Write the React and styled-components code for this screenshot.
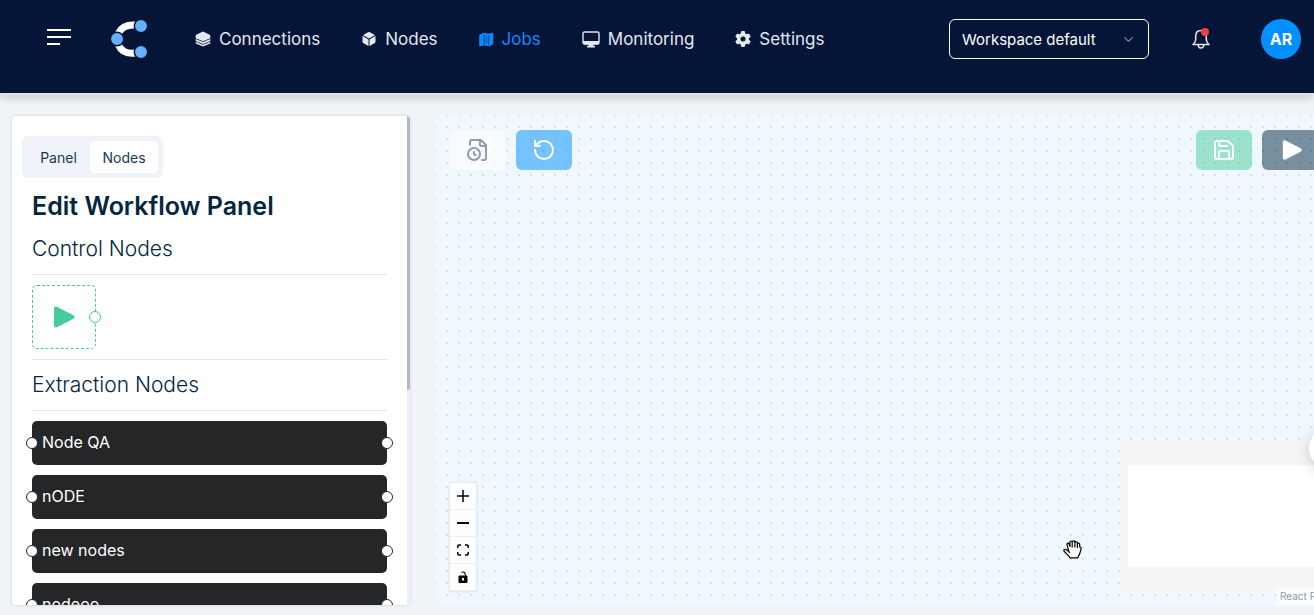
import React from "react";
import styled, { createGlobalStyle, css } from "styled-components";
import { FileClock, RotateCcw, Save, ChevronDown } from "lucide-react";
import { IoCube } from "react-icons/io5";
import { FaGear } from "react-icons/fa6";

const GlobalStyle = createGlobalStyle`
  *, *::before, *::after { box-sizing: border-box; }
  body {
    margin: 0;
    overflow: hidden;
    background: #f0f3f8;
    color: #02263f;
    font-family: Inter, "Open Sans", sans-serif;
  }
  button, select { font-family: inherit; margin: 0; }
`;

const Page = styled.div`
  display: flex;
  flex-direction: column;
  height: 100vh;
`;

const Header = styled.header`
  display: flex;
  align-items: center;
  flex: none;
  padding: 16px 13px 31px 47px;
  background: #051537;
  border-bottom: 2px solid #e0e1e3;
  box-shadow: 0 2px 10px rgba(0, 0, 0, 0.2);
  z-index: 1;
`;

const IconButton = styled.button`
  display: flex;
  align-items: center;
  justify-content: center;
  padding: 0;
  border: 0;
  background: none;
  color: #e3e7f0;
`;

const LogoLink = styled.a`
  display: flex;
  margin: 0 48px 0 40px;
`;

const Nav = styled.nav`
  display: flex;
  align-items: center;
  gap: 41px;
`;

const NavLink = styled.a`
  display: flex;
  align-items: center;
  gap: 8px;
  height: 46px;
  color: ${(p) => (p.$active ? "#0a8cff" : "#e3e7f0")};
  font-size: 17px;
  line-height: 24px;
  text-decoration: none;
`;

const HeaderTools = styled.div`
  display: flex;
  align-items: center;
  margin-left: auto;
`;

const SelectBox = styled.label`
  display: grid;
  align-items: center;
  width: 200px;
  color: #fff;

  & > * { grid-area: 1 / 1; }
  & > svg {
    justify-self: end;
    margin-right: 13px;
    color: #7d879c;
    pointer-events: none;
  }
`;

const Select = styled.select`
  appearance: none;
  width: 100%;
  height: 40px;
  padding: 0 36px 0 12px;
  border: 1px solid #fff;
  border-radius: 6px;
  background: transparent;
  color: #fff;
  font-size: 15px;
`;

const BellButton = styled(IconButton)`
  position: relative;
  margin: 0 51px 0 43px;
`;

const Dot = styled.span`
  position: absolute;
  top: -1px;
  right: 1px;
  width: 8px;
  height: 8px;
  border-radius: 50%;
  background: #f44040;
`;

const Avatar = styled.button`
  width: 40px;
  height: 40px;
  padding: 0;
  border: 0;
  border-radius: 50%;
  background: #0090ff;
  color: #fff;
  font-size: 16px;
  font-weight: 700;
`;

const Main = styled.main`
  display: flex;
  flex: 1;
  gap: 25px;
  min-height: 0;
  padding: 20px 0 9px 12px;
  overflow: hidden;
`;

const Sidebar = styled.aside`
  display: flex;
  flex: none;
  width: 398px;
  margin: 1px 0;
  border-radius: 4px;
  background: #fff;
  box-shadow: 0 0 3px rgba(30, 50, 80, 0.2);
  overflow: hidden;
`;

const SidebarContent = styled.div`
  flex: 1;
  min-width: 0;
  padding: 20px;
  overflow: hidden;
`;

const ScrollTrack = styled.div`
  width: 3px;
  background: #f0f0f2;
`;

const ScrollThumb = styled.div`
  height: 56%;
  border-radius: 0 2px 2px 0;
  background: #b3b8bd;
`;

const Tabs = styled.div`
  display: inline-flex;
  margin-left: -10px;
  padding: 5px;
  border-radius: 6px;
  background: #f0f3f9;
`;

const Tab = styled.button`
  width: ${(p) => (p.$wide ? 68 : 63)}px;
  height: 32px;
  padding: 0;
  border: 0;
  border-radius: 4px;
  background: ${(p) => (p.$active ? "#fff" : "transparent")};
  color: #1b3a50;
  font-size: 14px;
`;

const Title = styled.h1`
  margin: 10px 0 0;
  font-size: 25px;
  line-height: 36px;
  font-weight: 600;
`;

const SectionTitle = styled.h2`
  margin: 0;
  padding: 9px 0;
  border-bottom: 1px solid #dfe4ec;
  font-size: 21px;
  line-height: 32px;
  font-weight: 300;
`;

const ControlRow = styled.div`
  padding: 10px 0;
  border-bottom: 1px solid #dfe4ec;
`;

const StartNode = styled.div`
  position: relative;
  display: flex;
  align-items: center;
  justify-content: center;
  width: 64px;
  height: 64px;
  border: 1px dashed #45c9a0;
  border-radius: 5px;
  color: #45cb9f;
`;

const Handle = styled.span`
  position: absolute;
  top: calc(50% - 6px);
  ${(p) => (p.$side === "left" ? css`left: -6px;` : css`right: -6px;`)}
  width: 12px;
  height: 12px;
  border: 1px solid ${(p) => p.$color || "#242628"};
  border-radius: 50%;
  background: #fff;
`;

const NodeList = styled.div`
  display: flex;
  flex-direction: column;
  gap: 10px;
  padding-top: 10px;
`;

const NodeItem = styled.div`
  position: relative;
  height: 44px;
  padding: 0 10px;
  border-radius: 5px;
  background: #242628;
  color: #fff;
  font-size: 16px;
  line-height: 43px;
`;

const Canvas = styled.section`
  position: relative;
  display: flex;
  flex: 1;
  flex-direction: column;
  justify-content: space-between;
  margin-right: -23px;
  padding: 15px;
  border-radius: 8px;
  background: radial-gradient(circle, #d5dde5 1px, transparent 1px) -6px -6px / 12px 12px #f0f8ff;
`;

const Toolbar = styled.div`
  display: flex;
  gap: 10px;
  padding-right: 4px;
`;

const ToolButton = styled.button`
  display: flex;
  align-items: center;
  justify-content: center;
  width: 56px;
  height: 40px;
  padding: 0;
  border: 0;
  border-radius: 6px;
  background: ${(p) => p.$bg};
  color: ${(p) => p.$color || "#fff"};
`;

const RunButton = styled(ToolButton)`
  padding-left: 4px;
`;

const Spacer = styled.div`
  flex: 1;
`;

const CanvasFooter = styled.div`
  display: flex;
  align-items: flex-end;
  justify-content: space-between;
`;

const Controls = styled.div`
  width: 26px;
  box-shadow: 0 0 2px 1px rgba(0, 0, 0, 0.08);
`;

const ControlButton = styled.button`
  display: flex;
  align-items: center;
  justify-content: center;
  width: 26px;
  height: 27px;
  padding: 0;
  border: 0;
  border-bottom: 1px solid #eee;
  background: #fefefe;
  color: #000;
`;

const MiniMap = styled.div`
  width: 200px;
  height: 150px;
  padding: 24px 6px;
  background: #f5f5f5;
`;

const MiniView = styled.div`
  height: 100%;
  background: #fff;
`;

const HelpBubble = styled.button`
  position: absolute;
  right: -14px;
  bottom: 137px;
  width: 42px;
  height: 42px;
  padding: 0;
  border: 0;
  border-radius: 50%;
  background: #fff;
  box-shadow: 0 4px 16px rgba(0, 0, 0, 0.16);
`;

const Attribution = styled.a`
  position: absolute;
  right: 0;
  bottom: 0;
  width: 60px;
  padding: 2px 3px;
  background: rgba(255, 255, 255, 0.5);
  color: #999;
  font-size: 10px;
  line-height: 15px;
  text-decoration: none;
  white-space: nowrap;
`;

const Cursor = styled.svg`
  position: absolute;
  right: 255px;
  bottom: 47px;
`;

const MenuIcon = () => (
  <svg width="24" height="20" viewBox="0 0 24 20" stroke="#fff" strokeWidth="2" aria-hidden="true">
    <path d="M0 1h24M0 8h24M0 15h13" />
  </svg>
);

const Logo = () => (
  <svg width="36" height="38" viewBox="0 0 36 38" aria-hidden="true">
    <path d="M24 5 C15 4.500 10 8 7.500 13" fill="none" stroke="#fff" strokeWidth="7" />
    <path d="M7.500 25 C10 31 15 34 24 33" fill="none" stroke="#fff" strokeWidth="7" />
    <g fill="#63b1ff" stroke="#051537" strokeWidth="1.500">
      <circle cx="30" cy="6" r="6.700" />
      <circle cx="6" cy="19" r="6.700" />
      <circle cx="30" cy="32" r="6.700" />
    </g>
  </svg>
);

const LayersIcon = () => (
  <svg width="16" height="16" viewBox="0 0 16 16" fill="currentColor" aria-hidden="true">
    <path d="M8 .5 15.300 4v3.200L8 10.200.7 7.200V4z" />
    <path d="M.7 8 8 11l7.300-3v1.900L8 12.900.7 9.900z" />
    <path d="M.7 10.700 8 13.700l7.300-3v1.700L8 15.500.7 12.400z" />
  </svg>
);

const MapIcon = () => (
  <svg width="15" height="15" viewBox="0 0 15 15" aria-hidden="true">
    <path d="M1 3.500 5 1.500l4.500 1 4-1v10L10 13.500l-4.500-1-4.500 1z" fill="#0a8cff" stroke="#0a8cff" strokeWidth="1.500" strokeLinejoin="round" />
    <path d="M5.200 2.500V12M9.700 3.500v9.500" stroke="#063d7c" strokeWidth="1" />
    <path d="M7.500 3.500v8" stroke="#0663b8" strokeWidth="1.500" />
  </svg>
);

const DesktopIcon = () => (
  <svg width="18" height="17" viewBox="0 0 18 17" aria-hidden="true">
    <rect x="1" y="1" width="16" height="12" rx="1.500" fill="none" stroke="currentColor" strokeWidth="1.400" />
    <path d="M1 10h16v1.500a2 2 0 0 1-2 2h-3.500V15H13v1.500H5V15h1.500v-1.500H3a2 2 0 0 1-2-2z" fill="currentColor" />
  </svg>
);

const BellIcon = () => (
  <svg width="18" height="21" viewBox="0 0 18 21" fill="none" stroke="currentColor" strokeWidth="1.500" strokeLinejoin="round" aria-hidden="true">
    <path d="M9 1.500C5.500 1.500 3.700 4 3.700 7v3.500c0 2-1.200 3.700-2.700 5h16c-1.500-1.300-2.700-3-2.700-5V7c0-3-1.800-5.500-5.300-5.500z" />
    <path d="M6.200 15.800c0 4.400 5.600 4.400 5.600 0" />
  </svg>
);

const PlayIcon = ({ size = 24 }) => (
  <svg width={size} height={size} viewBox="0 0 24 24" aria-hidden="true">
    <path d="M4 3.500v17L20.500 12z" fill="currentColor" stroke="currentColor" strokeWidth="4" strokeLinejoin="round" />
  </svg>
);

const PlusIcon = () => (
  <svg width="12" height="12" viewBox="0 0 12 12" stroke="currentColor" strokeWidth="1.500" aria-hidden="true">
    <path d="M6 0v12M0 6h12" />
  </svg>
);

const MinusIcon = () => (
  <svg width="12" height="12" viewBox="0 0 12 12" stroke="currentColor" strokeWidth="2" aria-hidden="true">
    <path d="M0 6h12" />
  </svg>
);

const FitIcon = () => (
  <svg width="12" height="12" viewBox="0 0 12 12" fill="none" stroke="currentColor" strokeWidth="1.500" aria-hidden="true">
    <path d="M.8 4V2a1 1 0 0 1 1-1H4M8 1h2.200a1 1 0 0 1 1 1v2M11.200 8v2a1 1 0 0 1-1 1H8M4 11H1.800a1 1 0 0 1-1-1V8" />
  </svg>
);

const LockIcon = () => (
  <svg width="12" height="13" viewBox="0 0 12 13" aria-hidden="true">
    <path d="M4.500 1.500C6.500.3 8.500 1.300 8.300 4.500" fill="none" stroke="currentColor" strokeWidth="1.200" />
    <path fillRule="evenodd" d="M2.500 4.500h7a1 1 0 0 1 1 1V11a1 1 0 0 1-1 1h-7a1 1 0 0 1-1-1V5.500a1 1 0 0 1 1-1zM5 7v2.500h2V7z" fill="currentColor" />
  </svg>
);

const HandCursor = () => (
  <Cursor width="19" height="19" viewBox="0 0 19 19" fill="#fff" stroke="#000" strokeWidth="1.200" strokeLinejoin="round" aria-hidden="true">
    <path d="M7 17.800C5.500 15.500 3 13.300 1 11c-.6-1.300.8-2.200 2-1.400l2.800 2L4 4.500c-.2-1.600 1.600-1.900 2.100-.4L7 6.500 6.900 2.200c.1-1.600 2-1.600 2.300 0 .4-1.900 2.700-1.700 2.700.2 1-1.300 2.700-.7 2.500 1 1.300-.8 2.600 0 2.300 1.600v2c1.600 0 1.600 1.500 1.200 3-.6 2.500-1.900 5.400-3.100 7.800z" />
    <path d="M5.800 11.600l1 1.200M9.200 2.200v5.300M11.900 2.400v5.100M14.400 3.400v4.600" fill="none" />
  </Cursor>
);

const navItems = [
  { label: "Connections", icon: <LayersIcon /> },
  { label: "Nodes", icon: <IoCube size={16} /> },
  { label: "Jobs", icon: <MapIcon />, active: true },
  { label: "Monitoring", icon: <DesktopIcon /> },
  { label: "Settings", icon: <FaGear size={16} /> },
];

const nodes = ["Node QA", "nODE", "new nodes", "nodeoo"];

export default function App() {
  return (
    <>
      <GlobalStyle />
      <Page>
        <Header>
          <IconButton aria-label="Menu"><MenuIcon /></IconButton>
          <LogoLink href="#" aria-label="Home"><Logo /></LogoLink>
          <Nav>
            {navItems.map((n) => (
              <NavLink key={n.label} href="#" $active={n.active}>
                {n.icon}
                {n.label}
              </NavLink>
            ))}
          </Nav>
          <HeaderTools>
            <SelectBox>
              <Select aria-label="Workspace">
                <option>Workspace default</option>
              </Select>
              <ChevronDown size={15} />
            </SelectBox>
            <BellButton aria-label="Notifications">
              <BellIcon />
              <Dot />
            </BellButton>
            <Avatar>AR</Avatar>
          </HeaderTools>
        </Header>
        <Main>
          <Sidebar>
            <SidebarContent>
              <Tabs>
                <Tab>Panel</Tab>
                <Tab $active $wide>Nodes</Tab>
              </Tabs>
              <Title>Edit Workflow Panel</Title>
              <SectionTitle>Control Nodes</SectionTitle>
              <ControlRow>
                <StartNode>
                  <PlayIcon />
                  <Handle $side="right" $color="#45c9a0" />
                </StartNode>
              </ControlRow>
              <SectionTitle>Extraction Nodes</SectionTitle>
              <NodeList>
                {nodes.map((n) => (
                  <NodeItem key={n}>
                    <Handle $side="left" />
                    {n}
                    <Handle $side="right" />
                  </NodeItem>
                ))}
              </NodeList>
            </SidebarContent>
            <ScrollTrack><ScrollThumb /></ScrollTrack>
          </Sidebar>
          <Canvas>
            <Toolbar>
              <ToolButton $bg="rgba(255,255,255,0.6)" $color="#8d9bae" aria-label="Schedule"><FileClock size={24} /></ToolButton>
              <ToolButton $bg="rgba(30,155,255,0.58)" aria-label="Undo"><RotateCcw size={24} /></ToolButton>
              <Spacer />
              <ToolButton $bg="rgba(70,203,155,0.5)" aria-label="Save"><Save size={24} /></ToolButton>
              <RunButton $bg="rgba(0,38,63,0.5)" aria-label="Run"><PlayIcon size={22} /></RunButton>
            </Toolbar>
            <CanvasFooter>
              <Controls>
                <ControlButton aria-label="Zoom in"><PlusIcon /></ControlButton>
                <ControlButton aria-label="Zoom out"><MinusIcon /></ControlButton>
                <ControlButton aria-label="Fit view"><FitIcon /></ControlButton>
                <ControlButton aria-label="Lock"><LockIcon /></ControlButton>
              </Controls>
              <MiniMap><MiniView /></MiniMap>
            </CanvasFooter>
            <HelpBubble aria-label="Help" />
            <Attribution href="#">React Flow</Attribution>
            <HandCursor />
          </Canvas>
        </Main>
      </Page>
    </>
  );
}
